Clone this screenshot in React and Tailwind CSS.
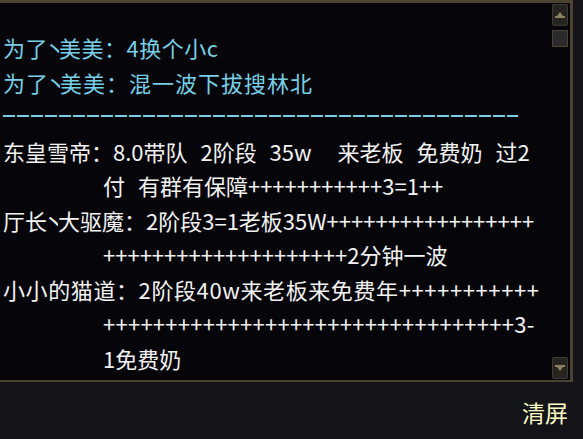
import React from "react";

const FONT = { fontFamily: '"Noto Sans CJK SC", "Noto Sans", sans-serif' };

// 丶 is drawn half-width in the game font
function Dot() {
  return (
    <span className="inline-block w-[11px] overflow-hidden align-top">
      <span className="-ml-[4px] inline-block">丶</span>
    </span>
  );
}

const WHITE = "text-[#f2f2f2]";
const CYAN = "text-[#76cfe6]";

const lines = [
  { text: ["为了", <Dot key="d" />, "美美：4换个小c"], color: CYAN, extra: "tracking-[0.5px]" },
  { text: ["为了", <Dot key="d" />, "美美：混一波下拔搜林北"], color: CYAN, extra: "tracking-[1px]" },
  { dash: true },
  { text: "东皇雪帝：8.0带队 2阶段 35w  来老板 免费奶 过2", color: WHITE, extra: "[word-spacing:8px]" },
  { text: "付 有群有保障+++++++++++3=1++", color: WHITE, indent: true, extra: "[word-spacing:8px]" },
  { text: ["厅长", <Dot key="d" />, "大驱魔：2阶段3=1老板35W+++++++++++++++++"], color: WHITE },
  { text: "++++++++++++++++++++2分钟一波", color: WHITE, indent: true },
  { text: "小小的猫道：2阶段40w来老板来免费年+++++++++++", color: WHITE, extra: "tracking-[0.6px]" },
  { text: "+++++++++++++++++++++++++++++++++3-", color: WHITE, indent: true, extra: "tracking-[0.25px]" },
  { text: "1免费奶", color: WHITE, indent: true },
];

function ScrollButton({ down }) {
  return (
    <div className="flex h-[22px] w-[16px] items-center justify-center rounded-[2px] border border-[#3d3a30] bg-[#25241f]">
      <svg width="10" height="6" viewBox="0 0 10 6">
        {down ? (
          <path d="M0 0H10V2H8L5 6L2 2H0Z" fill="#8a8068" />
        ) : (
          <path d="M0 6H10V4H8L5 0L2 4H0Z" fill="#8a8068" />
        )}
      </svg>
    </div>
  );
}

export default function App() {
  return (
    <div className="flex h-[439px] w-[583px] flex-col overflow-hidden bg-[#141418]" style={FONT}>
      <div className="flex h-[382px] w-[573px] shrink-0 border-t-[3px] border-r-[3px] border-b-[2px] border-[#4d4332] bg-[#06060a]">
        <div className="flex-1 overflow-hidden pl-[3px] pt-[27px]">
          {lines.map((line, i) =>
            line.dash ? (
              <div key={i} className="flex h-[34.5px] items-center">
                <div className="h-[2px] w-[515px] bg-[repeating-linear-gradient(90deg,#76cfe6_0_12px,transparent_12px_14px)]" />
              </div>
            ) : (
              <div
                key={i}
                className={`h-[34.5px] whitespace-pre text-[22px] leading-[34.5px] ${line.color} ${line.indent ? "pl-[100px]" : ""} ${line.extra || ""}`}
              >
                {line.text}
              </div>
            )
          )}
        </div>
        <div className="mr-[2px] flex w-[16px] flex-col pt-[1px] pb-[1px]">
          <ScrollButton />
          <div className="mt-[4px] h-[17px] w-[16px] border border-[#4a4434] bg-[#2a2a2c]" />
          <div className="flex-1" />
          <ScrollButton down />
        </div>
      </div>
      <div className="flex flex-1 items-center justify-end pt-[4px] pr-[15px]">
        <span className="text-[23px] leading-none text-[#fdfcc4]">清屏</span>
      </div>
    </div>
  );
}
